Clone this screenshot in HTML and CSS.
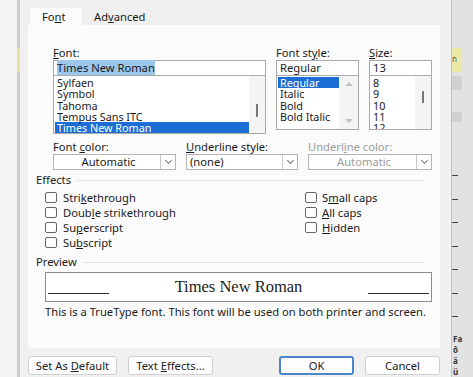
FILE: index.html
```html
<!DOCTYPE html>
<html>
  <head>
    <meta name="viewport" content="width=device-width,initial-scale=1.0">
    <title>Font</title>
    <link rel="stylesheet" href="styles.css">
  </head>
  <body>
    <div class="left-strip"></div>
    <div class="left-edge"><div class="mark"></div></div>

    <!-- Font dialog -->
    <div class="dialog">
      <div class="tabs">
        <div class="tab active">Fo<u>n</u>t</div>
        <div class="tab">Ad<u>v</u>anced</div>
      </div>

      <div class="panel">
        <div class="font-grid">
          <div class="field">
            <label><u>F</u>ont:</label>
            <div class="input"><span class="sel-text">Times New Roman</span></div>
            <div class="list list-font">
              <ul>
                <li>Sylfaen</li>
                <li>Symbol</li>
                <li>Tahoma</li>
                <li>Tempus Sans ITC</li>
                <li class="selected">Times New Roman</li>
              </ul>
              <div class="scroll"><div class="thumb thumb-font"></div></div>
            </div>
          </div>
          <div class="field">
            <label>Font st<u>y</u>le:</label>
            <div class="input">Regular</div>
            <div class="list">
              <ul>
                <li class="selected">Regular</li>
                <li>Italic</li>
                <li>Bold</li>
                <li>Bold Italic</li>
              </ul>
              <div class="scroll arrows"><span class="arrow up"></span><span class="arrow down"></span></div>
            </div>
          </div>
          <div class="field">
            <label><u>S</u>ize:</label>
            <div class="input">13</div>
            <div class="list">
              <ul>
                <li>8</li>
                <li>9</li>
                <li>10</li>
                <li>11</li>
                <li>12</li>
              </ul>
              <div class="scroll"><div class="thumb thumb-size"></div></div>
            </div>
          </div>
        </div>

        <div class="combo-grid">
          <div class="field">
            <label>Font <u>c</u>olor:</label>
            <div class="combo center"><span>Automatic</span><i class="chev"></i></div>
          </div>
          <div class="field">
            <label><u>U</u>nderline style:</label>
            <div class="combo"><span>(none)</span><i class="chev"></i></div>
          </div>
          <div class="field disabled">
            <label>Underl<u>i</u>ne color:</label>
            <div class="combo center"><span>Automatic</span><i class="chev"></i></div>
          </div>
        </div>

        <div class="group-title"><span>Effects</span></div>
        <div class="effects">
          <div class="checks">
            <div class="check"><i></i><span>Stri<u>k</u>ethrough</span></div>
            <div class="check"><i></i><span>Doub<u>l</u>e strikethrough</span></div>
            <div class="check"><i></i><span>Su<u>p</u>erscript</span></div>
            <div class="check"><i></i><span>Su<u>b</u>script</span></div>
          </div>
          <div class="checks">
            <div class="check"><i></i><span>S<u>m</u>all caps</span></div>
            <div class="check"><i></i><span><u>A</u>ll caps</span></div>
            <div class="check"><i></i><span><u>H</u>idden</span></div>
          </div>
        </div>

        <div class="group-title preview-title"><span>Preview</span></div>
        <div class="preview">
          <div class="rule"></div>
          <div class="sample">Times New Roman</div>
          <div class="rule"></div>
        </div>
        <p class="note">This is a TrueType font. This font will be used on both printer and screen.</p>
      </div>

      <div class="buttons">
        <button class="btn default">Set As <u>D</u>efault</button>
        <button class="btn effects-btn">Text <u>E</u>ffects...</button>
        <div class="spacer"></div>
        <button class="btn primary">OK</button>
        <button class="btn">Cancel</button>
      </div>
    </div>

    <div class="right-strip">
      <div class="hl">n</div>
      <div class="shade"></div>
      <div class="shade small"></div>
      <div class="ticks"></div>
      <div class="doc-text">Fa<br>ô<br>ä<br>ü</div>
    </div>
  </body>
</html>
```

FILE: styles.css
```css
* { box-sizing: border-box; }

body {
  margin: 0;
  width: 473px;
  height: 377px;
  display: flex;
  overflow: hidden;
  background: #f0f0f0;
  font-family: "Noto Sans", "Open Sans", sans-serif;
  font-size: 11.2px;
  color: #1a1a1a;
}

u { text-underline-offset: 1px; }

/* Window edges behind the dialog */
.left-strip { width: 17px; background: #f3f3f3; }
.left-edge { width: 3px; background: #cdcdcd; padding-top: 48px; }
.left-edge .mark { height: 24px; background: #e8e2a4; }

.right-strip {
  width: 22px;
  background: #e2e2e2;
  border-left: 1px solid #c4c4c4;
  padding-top: 48px;
  font-size: 8px;
  font-weight: bold;
  line-height: 11px;
}
.right-strip .hl { height: 24px; width: 10px; background: #ece9a8; color: #555; padding-top: 5px; font-weight: normal; }
.right-strip .shade { height: 14px; width: 10px; background: #d0d0d0; margin-top: 4px; }
.right-strip .shade.small { height: 10px; margin-top: 22px; }
.right-strip .ticks {
  margin-top: 53px;
  width: 6px;
  height: 158px;
  background: repeating-linear-gradient(to bottom, #444 0 1px, transparent 1px 23.5px);
}
.right-strip .doc-text { color: #333; padding-left: 1px; }

/* Dialog */
.dialog {
  width: 431px;
  display: flex;
  flex-direction: column;
  padding: 8px 11px 0 8px;
  background: #f0f0f0;
}

.tabs { display: flex; height: 17px; padding-left: 2px; }
.tab { padding: 2px 11px 0 12px; line-height: 14px; }
.tab.active { width: 52px; background: #fbfbfb; }

.panel {
  height: 323px;
  background: #fbfbfb;
  padding: 22px 8px 0 8px;
}

label { display: block; height: 13px; line-height: 12px; white-space: nowrap; }

.font-grid {
  display: grid;
  grid-template-columns: 213px 83px 63px;
  align-items: start;
  column-gap: 10px;
  margin-left: 17px;
}

.input {
  height: 16px;
  border: 1px solid #a9a9a9;
  background: #fff;
  padding: 0 3px;
  line-height: 14px;
}
.sel-text { background: #9cc8ee; }

.list {
  height: 54px;
  display: flex;
  border: 1px solid #a9a9a9;
  border-top: none;
  background: #fff;
}
.list.list-font { height: 58px; }
.list ul {
  list-style: none;
  margin: 0;
  padding: 1px 0 0 1px;
  flex: 1;
  font-size: 10.8px;
  line-height: 11.25px;
  overflow: hidden;
}
.list li { padding-left: 2px; }
.list li.selected { background: #1c6ed5; color: #fff; }

.scroll { width: 16px; background: #f4f4f4; display: flex; justify-content: center; }
.thumb { width: 2px; background: #777; }
.thumb-font { margin-top: 28px; height: 13px; }
.thumb-size { margin-top: 15px; height: 12px; }

.scroll.arrows { width: 19px; flex-direction: column; align-items: center; justify-content: space-between; padding: 6px 0; }
.arrow { width: 0; height: 0; border-left: 4px solid transparent; border-right: 4px solid transparent; }
.arrow.up { border-bottom: 4px solid #c2c2c2; }
.arrow.down { border-top: 4px solid #c2c2c2; }

.combo-grid {
  display: grid;
  grid-template-columns: 123px 112px 124px;
  column-gap: 10px;
  margin: 7px 0 0 17px;
}
.combo {
  height: 16px;
  display: flex;
  border: 1px solid #b4b4b4;
  background: #fff;
  line-height: 14px;
}
.combo span { flex: 1; padding-left: 3px; }
.combo.center span { text-align: center; }
.chev {
  width: 15px;
  border-left: 1px solid #c8c8c8;
  display: flex;
  align-items: center;
  justify-content: center;
}
.chev::after {
  content: "";
  width: 4px;
  height: 4px;
  border-right: 1px solid #777;
  border-bottom: 1px solid #777;
  transform: translateY(-2px) rotate(45deg);
}
.disabled label, .disabled .combo span { color: #9c9c9c; }

.group-title {
  display: flex;
  align-items: center;
  gap: 6px;
  height: 12px;
  line-height: 12px;
  margin-top: 4px;
}
.group-title::after {
  content: "";
  flex: 1;
  border-top: 1px solid #e0e0e0;
  margin-right: 8px;
}

.effects {
  display: grid;
  grid-template-columns: 260px 1fr;
  margin: 4px 0 0 9px;
}
.check { height: 15px; display: flex; align-items: center; gap: 6px; }
.check i {
  width: 12px;
  height: 11px;
  border: 1px solid #666;
  border-radius: 2px;
  background: #fff;
}
.checks:last-child .check { gap: 5px; }

.preview-title { margin-top: 6px; }
.preview {
  margin: 4px 0 0 9px;
  width: 387px;
  height: 30px;
  border: 1px solid #8c8c8c;
  background: #fff;
  display: flex;
  align-items: center;
  padding: 0 2px;
}
.rule { width: 61px; height: 1px; background: #333; margin-top: 12px; }
.sample {
  flex: 1;
  text-align: center;
  font-family: "Liberation Serif", serif;
  font-size: 16.5px;
  color: #222;
}
.note { margin: 4px 0 0 9px; line-height: 12px; white-space: nowrap; }

.buttons { display: flex; gap: 11px; margin-top: 8px; }
.spacer { flex: 1; }
.btn {
  height: 19px;
  font: inherit;
  color: #222;
  background: #fdfdfd;
  border: 1px solid #cfcfcf;
  border-radius: 3px;
  padding: 0;
}
.btn.default { width: 89px; }
.btn.effects-btn { width: 85px; }
.btn.primary { width: 75px; border: 2px solid #4a86c8; }
.btn:last-child { width: 75px; }
```
